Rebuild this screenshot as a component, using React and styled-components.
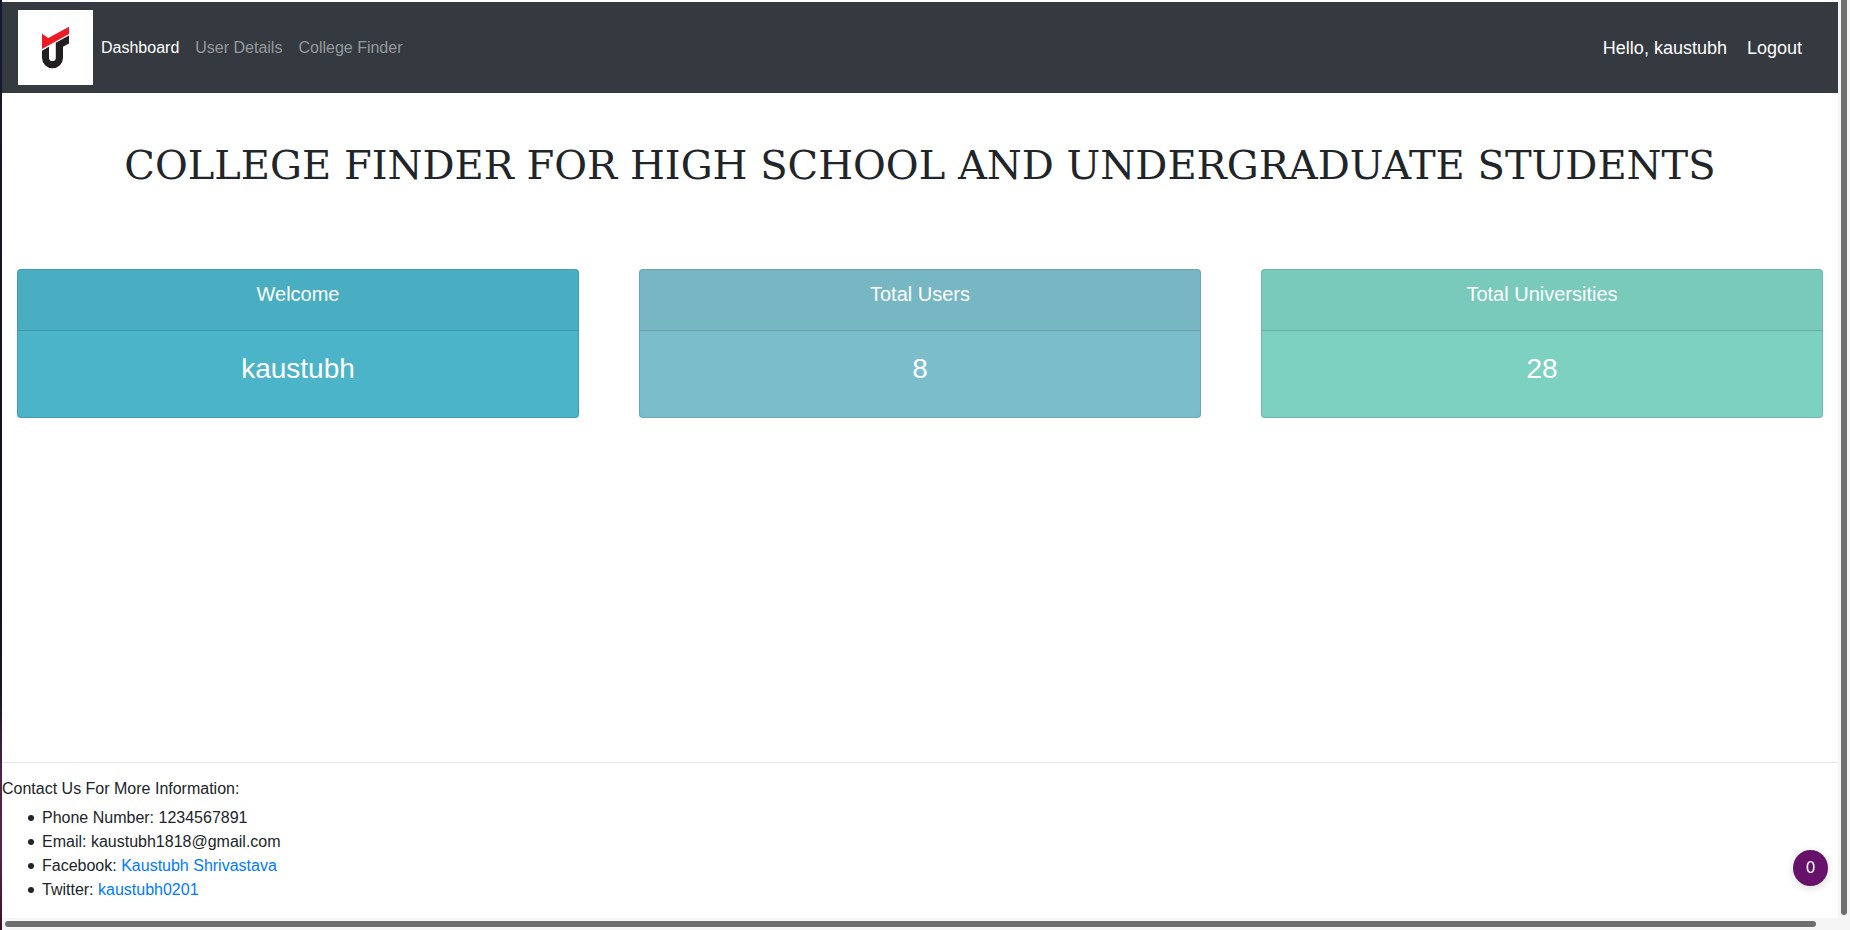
import React from "react";
import styled, { createGlobalStyle } from "styled-components";

const GlobalStyle = createGlobalStyle`
  *, *::before, *::after { box-sizing: border-box; }
  body {
    margin: 0;
    background: #fff;
    color: #212529;
    font-family: "Liberation Sans", Arial, sans-serif;
    font-size: 16px;
    line-height: 24px;
  }
`;

const Frame = styled.div`
  display: grid;
  grid-template-columns: 2px minmax(0, 1fr) 12px;
  grid-template-rows: 1fr 12px;
  min-height: 100vh;
`;

const DesktopEdge = styled.div`
  grid-row: 1 / 3;
  background: linear-gradient(#141a2e 0%, #10101f 60%, #17142a 74%, #4a2548 83%, #4c2a4c 92%, #35132f 100%);
`;

const Page = styled.div`
  display: flex;
  flex-direction: column;
  padding-top: 2px;
`;

const VerticalTrack = styled.div`
  display: flex;
  background: #f5f5f5;
  padding: 0 3px 3px;
`;

const HorizontalTrack = styled.div`
  display: flex;
  grid-column: 2 / 4;
  background: #f5f5f5;
  padding: 3px 34px 3px 3px;
`;

const Thumb = styled.div`
  flex: 1;
  background: #6e6e6e;
  border-radius: ${(p) => (p.$vertical ? "0 0 3px 3px" : "3px")};
`;

const Navbar = styled.nav`
  display: flex;
  align-items: center;
  padding: 8px 16px;
  background: #343a40;
`;

const Brand = styled.a`
  display: block;
  width: 75px;
  height: 75px;
  background: #fff;
`;

const NavLinks = styled.div`
  display: flex;
  flex: 1;
`;

const NavLink = styled.a`
  padding: 8px;
  color: ${(p) => (p.$active ? "#fff" : "#96999c")};
  text-decoration: none;
`;

const Account = styled.div`
  display: flex;
  gap: 20px;
  padding-right: 20px;
  color: #fff;
  font-size: 18px;
`;

const LogoutLink = styled.a`
  color: inherit;
  text-decoration: none;
`;

const Title = styled.h1`
  margin: 48px 0 80px;
  font-family: "DejaVu Serif", serif;
  font-size: 40px;
  font-weight: 400;
  line-height: 48px;
  text-align: center;
`;

const Cards = styled.main`
  display: grid;
  grid-template-columns: repeat(3, minmax(0, 1fr));
  gap: 60px;
  padding: 0 15px;
`;

const Card = styled.section`
  border: 1px solid rgba(0, 0, 0, 0.125);
  border-radius: 4px;
  background: ${(p) => p.$color};
  background-clip: border-box;
  color: #fff;
  text-align: center;
`;

const CardHeader = styled.header`
  padding: 12px 20px 24px;
  background: rgba(0, 0, 0, 0.03);
  border-bottom: 1px solid rgba(0, 0, 0, 0.125);
`;

const CardTitle = styled.h2`
  margin: 0;
  font-size: 20px;
  font-weight: 400;
  line-height: 24px;
`;

const CardValue = styled.p`
  margin: 0;
  padding: 20px 20px 30px;
  font-size: 28px;
  line-height: 36px;
`;

const Footer = styled.footer`
  margin-top: auto;
  padding: 16px 0;
  border-top: 1px solid #e5e5e5;
`;

const ContactTitle = styled.h3`
  margin: 0 0 8px;
  font-size: 16px;
  font-weight: 400;
  line-height: 19px;
`;

const ContactList = styled.ul`
  margin: 0;
  padding-left: 26px;
  list-style: none;
`;

const ContactItem = styled.li`
  &::before {
    content: "";
    display: inline-block;
    width: 6px;
    height: 6px;
    margin-right: 8px;
    border-radius: 50%;
    background: currentColor;
    vertical-align: 2px;
  }
`;

const ContactLink = styled.a`
  color: #007bff;
  text-decoration: none;
`;

const CounterButton = styled.button`
  position: fixed;
  right: 22px;
  bottom: 44px;
  width: 35px;
  height: 36px;
  padding: 0;
  border: 0;
  border-radius: 50%;
  background: #66126a;
  color: #fff;
  font-family: "DejaVu Sans", sans-serif;
  font-size: 16px;
  line-height: 24px;
  box-shadow: 0 2px 8px rgba(0, 0, 0, 0.15);
`;

const stats = [
  { title: "Welcome", value: "kaustubh", color: "#4cb4c9" },
  { title: "Total Users", value: "8", color: "#7bbdcb" },
  { title: "Total Universities", value: "28", color: "#7dd1c1" },
];

function Logo() {
  return (
    <svg width="75" height="75" viewBox="0 0 75 75" aria-hidden="true">
      <path d="M24 23.700 L30.300 28 L51 16.700 V23.900 L24 39 Z" fill="#ed1c24" />
      <path
        d="M24 40.700 L31 36.800 V47.700 A3.400 3.400 0 0 0 37.800 47.700 V32.800 L51 25.400 V33.400 L45 36.700 V47.800 A10.500 10.500 0 0 1 24 47.800 Z"
        fill="#231f20"
      />
    </svg>
  );
}

export default function App() {
  return (
    <>
      <GlobalStyle />
      <Frame>
        <DesktopEdge />
        <Page>
          <Navbar>
            <Brand href="#" aria-label="Home">
              <Logo />
            </Brand>
            <NavLinks>
              <NavLink href="#" $active>Dashboard</NavLink>
              <NavLink href="#">User Details</NavLink>
              <NavLink href="#">College Finder</NavLink>
            </NavLinks>
            <Account>
              <span>Hello, kaustubh</span>
              <LogoutLink href="#">Logout</LogoutLink>
            </Account>
          </Navbar>
          <Title>COLLEGE FINDER FOR HIGH SCHOOL AND UNDERGRADUATE STUDENTS</Title>
          <Cards>
            {stats.map((s) => (
              <Card key={s.title} $color={s.color}>
                <CardHeader>
                  <CardTitle>{s.title}</CardTitle>
                </CardHeader>
                <CardValue>{s.value}</CardValue>
              </Card>
            ))}
          </Cards>
          <Footer>
            <ContactTitle>Contact Us For More Information:</ContactTitle>
            <ContactList>
              <ContactItem>Phone Number: 1234567891</ContactItem>
              <ContactItem>Email: kaustubh1818@gmail.com</ContactItem>
              <ContactItem>Facebook: <ContactLink href="#">Kaustubh Shrivastava</ContactLink></ContactItem>
              <ContactItem>Twitter: <ContactLink href="#">kaustubh0201</ContactLink></ContactItem>
            </ContactList>
          </Footer>
        </Page>
        <VerticalTrack>
          <Thumb $vertical />
        </VerticalTrack>
        <HorizontalTrack>
          <Thumb />
        </HorizontalTrack>
      </Frame>
      <CounterButton type="button">0</CounterButton>
    </>
  );
}
